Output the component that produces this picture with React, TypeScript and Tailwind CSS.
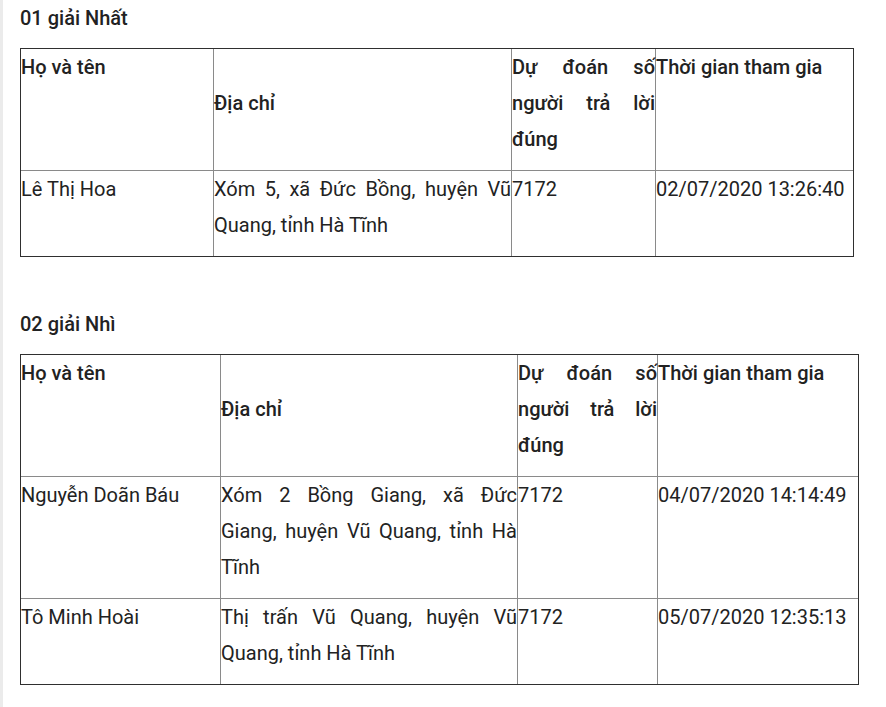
type Row = { name: string; address: string; guess: string; time: string };

const prizes: { title: string; widths: string[]; rows: Row[] }[] = [
  {
    title: "01 giải Nhất",
    widths: ["w-[193px]", "w-[298px]", "w-[144px]", "w-[197px]"],
    rows: [
      {
        name: "Lê Thị Hoa",
        address: "Xóm 5, xã Đức Bồng, huyện Vũ Quang, tỉnh Hà Tĩnh",
        guess: "7172",
        time: "02/07/2020 13:26:40",
      },
    ],
  },
  {
    title: "02 giải Nhì",
    widths: ["w-[200px]", "w-[297px]", "w-[140px]", "w-[200px]"],
    rows: [
      {
        name: "Nguyễn Doãn Báu",
        address: "Xóm 2 Bồng Giang, xã Đức Giang, huyện Vũ Quang, tỉnh Hà Tĩnh",
        guess: "7172",
        time: "04/07/2020 14:14:49",
      },
      {
        name: "Tô Minh Hoài",
        address: "Thị trấn Vũ Quang, huyện Vũ Quang, tỉnh Hà Tĩnh",
        guess: "7172",
        time: "05/07/2020 12:35:13",
      },
    ],
  },
];

const cell = "p-0 pb-[13px] align-top text-left border-[#8a8a8a]";

function PrizeTable({ title, widths, rows }: (typeof prizes)[number]) {
  return (
    <section>
      <h3 className="font-medium text-[20px] leading-[36px] mb-3">{title}</h3>
      <table className="table-fixed border-separate border-spacing-0 border border-[#2f2f2f]">
        <thead>
          <tr>
            <th className={`${cell} ${widths[0]} font-medium border-r border-b`}>Họ và tên</th>
            <th className={`${cell} ${widths[1]} font-medium border-r border-b !align-middle`}>Địa chỉ</th>
            <th className={`${cell} ${widths[2]} font-medium border-r border-b !text-justify`}>
              Dự đoán số người trả lời đúng
            </th>
            <th className={`${cell} ${widths[3]} font-medium border-b`}>Thời gian tham gia</th>
          </tr>
        </thead>
        <tbody>
          {rows.map((r, i) => {
            const last = i === rows.length - 1;
            const b = last ? "" : "border-b";
            return (
              <tr key={r.name}>
                <td className={`${cell} border-r ${b}`}>{r.name}</td>
                <td className={`${cell} border-r ${b} !text-justify`}>{r.address}</td>
                <td className={`${cell} border-r ${b}`}>{r.guess}</td>
                <td className={`${cell} ${b}`}>{r.time}</td>
              </tr>
            );
          })}
        </tbody>
      </table>
    </section>
  );
}

export default function App() {
  return (
    <div
      className="min-h-screen bg-white border-l-[3px] border-[#ebebeb] pl-[17px] text-[20px] leading-[36px] text-[#222]"
      style={{ fontFamily: "Roboto, 'Liberation Sans', sans-serif" }}
    >
      <div className="flex flex-col gap-[49px]">
        {prizes.map((p) => (
          <PrizeTable key={p.title} {...p} />
        ))}
      </div>
    </div>
  );
}
